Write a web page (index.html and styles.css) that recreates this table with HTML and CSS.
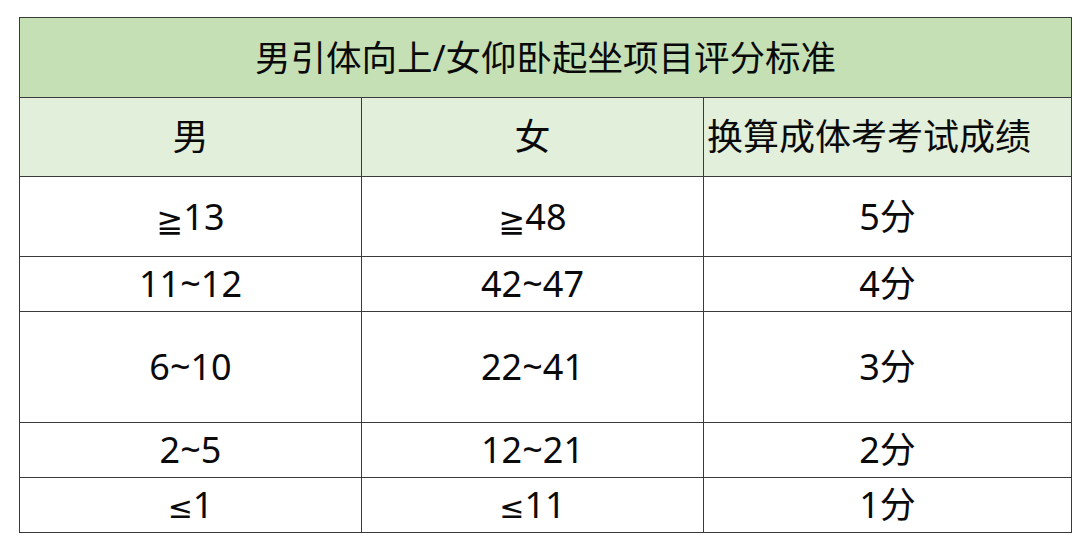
FILE: index.html
```html
<!DOCTYPE html>
<html lang="zh-CN">
<head>
<meta charset="utf-8">
<title>男引体向上/女仰卧起坐项目评分标准</title>
<link rel="stylesheet" href="styles.css">
</head>
<body>
<table class="score">
  <colgroup>
    <col class="c1"><col class="c2"><col class="c3">
  </colgroup>
  <tr class="r-title"><td colspan="3" class="title">男引体向上/女仰卧起坐项目评分标准</td></tr>
  <tr class="r-head"><td>男</td><td>女</td><td class="left">换算成体考考试成绩</td></tr>
  <tr class="r-80"><td><span class="sym ge">≧</span>13</td><td><span class="sym ge">≧</span>48</td><td>5分</td></tr>
  <tr class="r-55"><td>11~12</td><td>42~47</td><td>4分</td></tr>
  <tr class="r-111"><td>6~10</td><td>22~41</td><td>3分</td></tr>
  <tr class="r-55"><td>2~5</td><td>12~21</td><td>2分</td></tr>
  <tr class="r-55"><td><span class="sym">≤</span>1</td><td><span class="sym">≤</span>11</td><td>1分</td></tr>
</table>
</body>
</html>
```
FILE: styles.css
```css
html, body {
  margin: 0;
  padding: 0;
  background: #ffffff;
}
body {
  padding: 17px 0 0 19px;
  font-family: "Noto Sans", "Noto Sans CJK SC", sans-serif;
  color: #0a0a0a;
}
.score {
  border-collapse: collapse;
  table-layout: fixed;
  width: 1052px;
}
.c1 { width: 342px; }
.c2 { width: 342px; }
.c3 { width: 368px; }
.score td {
  border: 1px solid #3a3a3a;
  padding: 0;
  text-align: center;
  vertical-align: middle;
  font-size: 36px;
  line-height: 1;
  white-space: nowrap;
}
.score td.left {
  text-align: left;
  padding-left: 3px;
}
.sym {
  font-family: "DejaVu Sans", sans-serif;
  font-size: 30px;
}
.sym.ge {
  font-size: 32px;
  position: relative;
  top: 2px;
}
.r-title td { background: #c5e0b4; height: 79px; }
.score td.title { font-size: 35.5px; }
.r-head td { background: #e2efda; height: 78px; font-size: 36px; }
.r-80 td { height: 79px; }
.r-55 td { height: 54px; }
.r-111 td { height: 110px; }
```
